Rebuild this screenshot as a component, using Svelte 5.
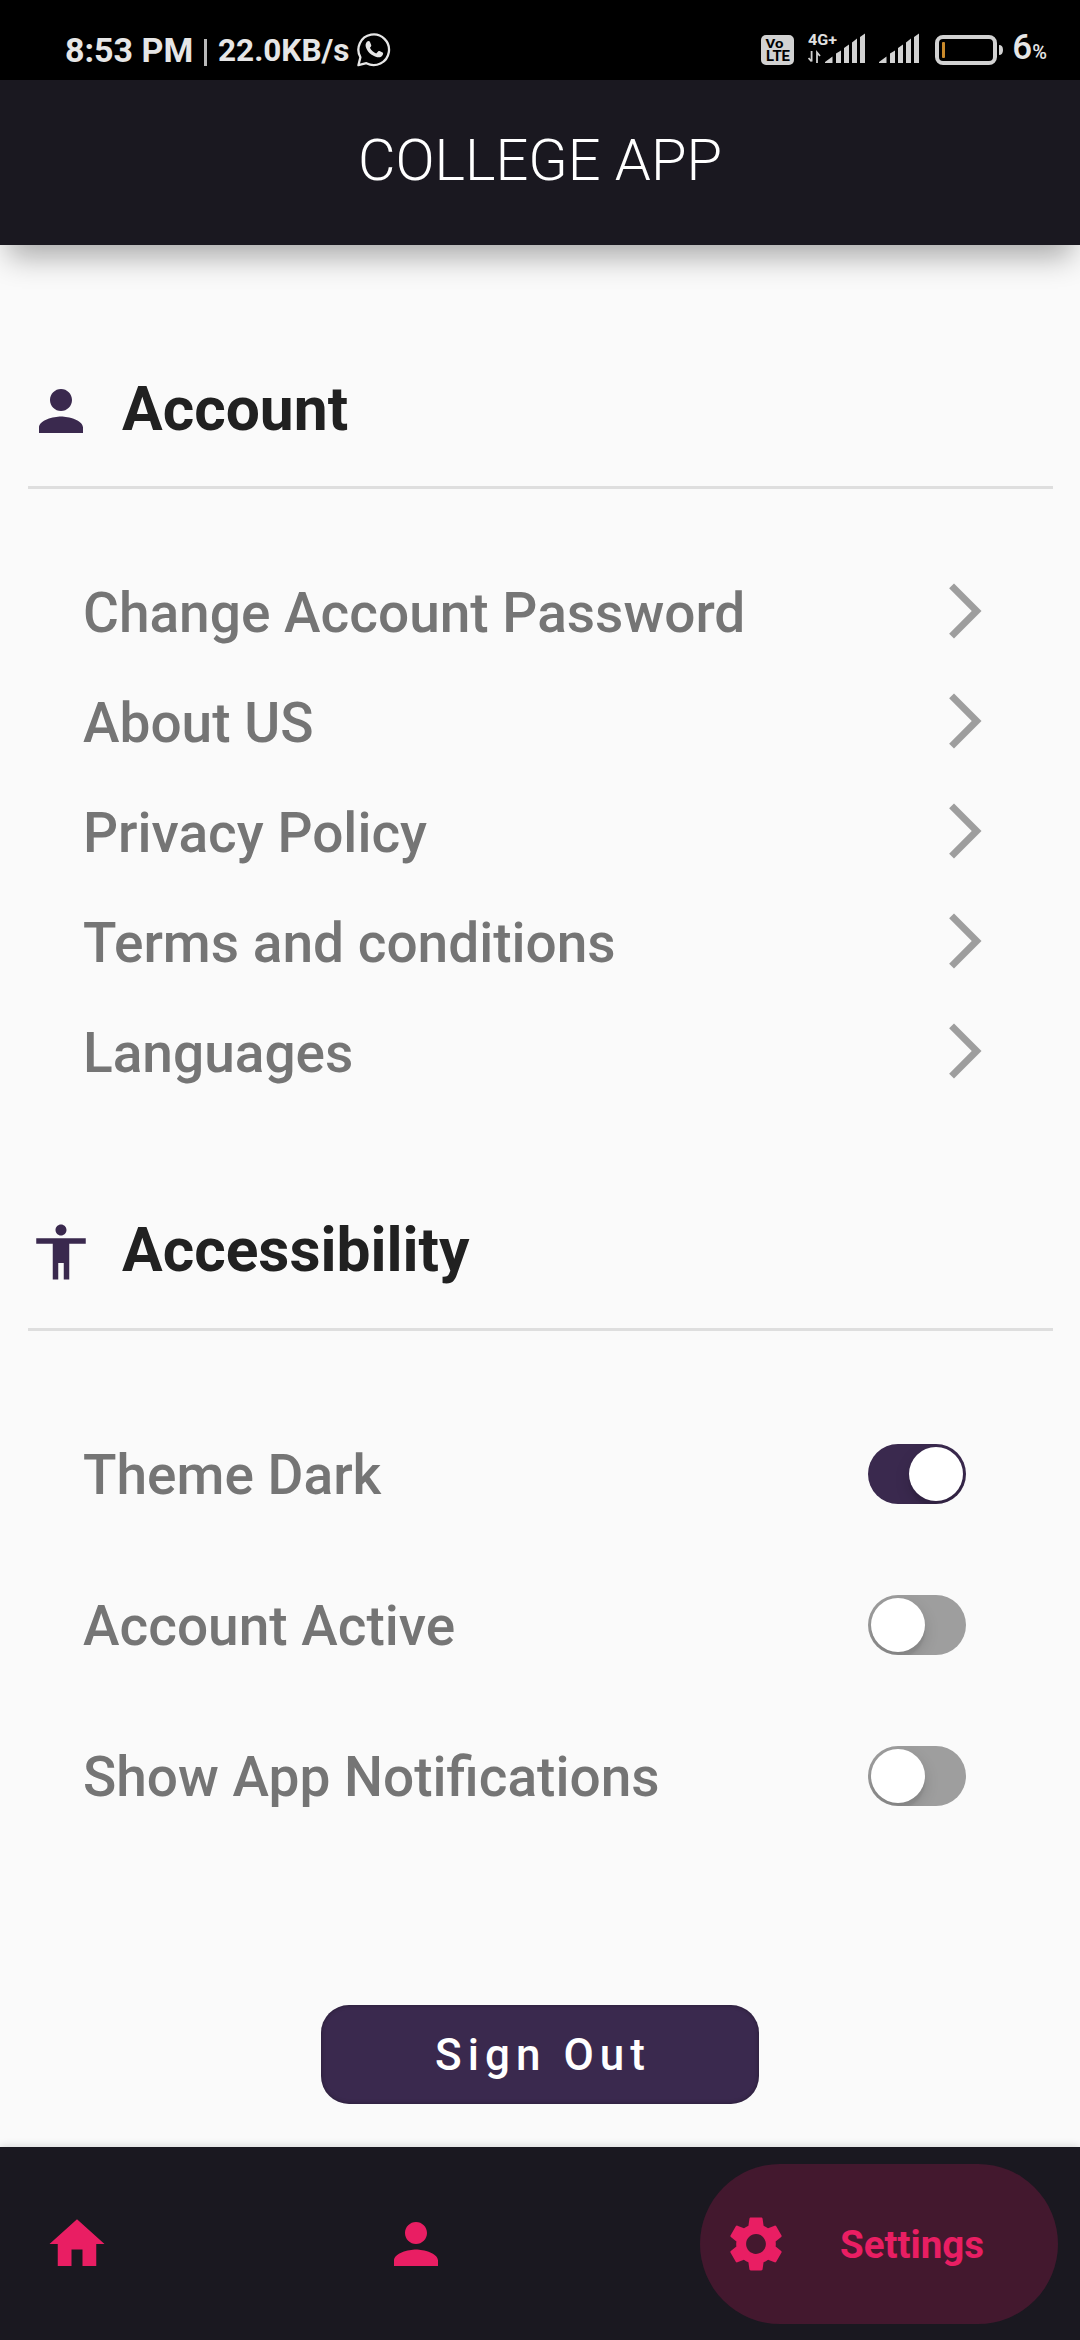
<script>
  const links = ['Change Account Password', 'About US', 'Privacy Policy', 'Terms and conditions', 'Languages'];
  let toggles = $state([
    { label: 'Theme Dark', on: true },
    { label: 'Account Active', on: false },
    { label: 'Show App Notifications', on: false }
  ]);
</script>

{#snippet person()}
  <svg class="icon" viewBox="0 0 24 24"><path d="M12 12c2.21 0 4-1.79 4-4s-1.79-4-4-4-4 1.79-4 4 1.79 4 4 4zm0 2c-2.67 0-8 1.34-8 4v2h16v-2c0-2.66-5.33-4-8-4z" /></svg>
{/snippet}

<div class="screen">
  <div class="status">
    <span class="time">8:53 PM</span>
    <span class="bar"></span>
    <span class="speed">22.0KB/s</span>
    <svg class="whatsapp" width="34" height="35" viewBox="0 0 34 35">
      <path d="M1.400 33.200 3.400 25.300A15.300 15.300 0 1 1 9.400 31.200Z" fill="none" stroke="#e6e6e6" stroke-width="2.300" stroke-linejoin="round" />
      <path d="M10.200 9.600c1-.8 2.300-.7 2.800.4l1.200 2.900c.3.800-.1 1.400-1.300 2.800 1.500 2.900 3.700 4.600 6.300 5.700l1.900-2c.4-.5.9-.6 1.500-.3l2.900 1.500c.8.400.7 1.200.3 2.200-.8 2-3.200 3-5.600 2.400-5.800-1.400-10.300-5.600-11.500-10.600-.4-1.900.2-3.800 1.500-5Z" fill="#e6e6e6" />
    </svg>
    <span class="grow"></span>
    <svg class="volte" width="33" height="30" viewBox="0 0 33 30">
      <rect width="33" height="30" rx="5" fill="#d2d2d2" />
      <text x="4.500" y="12.500" class="badge small" textLength="18" lengthAdjust="spacingAndGlyphs">Vo</text>
      <text x="5" y="26" class="badge" textLength="24" lengthAdjust="spacingAndGlyphs">LTE</text>
    </svg>
    <svg class="signal" width="58" height="40" viewBox="0 -4 58 40">
      <text x="0" y="12" class="net" textLength="29" lengthAdjust="spacingAndGlyphs">4G+</text>
      <path d="M3.600 18v10.500M0.500 25l3.100 3.500M9 30V19.500l3 3.500" fill="none" stroke="#d2d2d2" stroke-width="1.800" />
      <path d="M17 30v-1l7.500-5.500V30zM28 20.500l5-3V30h-5zM36 15l5-3.500V30h-5zM44 9.500l5-4V30h-5zM52 4l5-3.500V30h-5z" fill="#d2d2d2" />
    </svg>
    <svg class="signal2" width="41" height="32" viewBox="0 0 41 32">
      <path d="M0 30v-1l7.500-5.500V30zM11 20.500l5-3V30h-5zM19 15l5-3.500V30h-5zM27 9.500l5-4V30h-5zM35 4l5-3.500V30h-5z" fill="#d2d2d2" />
    </svg>
    <svg class="battery" width="68" height="30" viewBox="0 0 68 30">
      <rect x="2" y="2" width="58" height="26" rx="6" fill="none" stroke="#d2d2d2" stroke-width="4" />
      <rect x="7" y="7" width="3" height="16" rx="1" fill="#c98a2b" />
      <path d="M64 10q4 0 4 5t-4 5z" fill="#d2d2d2" />
    </svg>
    <span class="level">6<small>%</small></span>
  </div>

  <header><h1>COLLEGE APP</h1></header>

  <main>
    <section class="account">
      <div class="heading">
        {@render person()}
        <h2>Account</h2>
      </div>
      {#each links as link}
        <div class="row">
          <span class="label">{link}</span>
          <svg class="icon chevron" viewBox="0 0 24 24"><path d="M6.23 20.23 8 22l10-10L8 2 6.23 3.770 14.460 12z" /></svg>
        </div>
      {/each}
    </section>

    <section class="access">
      <div class="heading">
        <svg class="icon" viewBox="0 0 24 24"><path d="M12 2c1.100 0 2 .9 2 2s-.9 2-2 2-2-.9-2-2 .9-2 2-2zm9 7h-6v13h-2v-6h-2v6H9V9H3V7h18v2z" /></svg>
        <h2>Accessibility</h2>
      </div>
      {#each toggles as t}
        <div class="row tall">
          <span class="label">{t.label}</span>
          <button class="switch" class:on={t.on} aria-label={t.label} onclick={() => (t.on = !t.on)}><i></i></button>
        </div>
      {/each}
    </section>

    <button class="signout">Sign Out</button>
  </main>

  <nav>
    <span class="tab home"><svg class="icon" viewBox="0 0 24 24"><path d="M10 20v-6h4v6h5v-8h3L12 3 2 12h3v8z" /></svg></span>
    <span class="tab">{@render person()}</span>
    <span class="pill">
      <svg class="icon" viewBox="0 0 24 24"><path d="M19.140 12.940c.04-.3.060-.61.060-.94 0-.32-.02-.64-.07-.94l2.030-1.580c.18-.14.230-.41.120-.61l-1.920-3.320c-.12-.22-.37-.29-.59-.22l-2.390.96c-.5-.38-1.030-.7-1.620-.94l-.36-2.540c-.04-.24-.24-.41-.48-.41h-3.840c-.24 0-.43.170-.47.410l-.36 2.540c-.59.240-1.130.570-1.620.94l-2.390-.96c-.22-.08-.47 0-.59.220L2.740 8.870c-.12.210-.08.470.120.610l2.030 1.580c-.05.300-.09.630-.09.940s.02.640.070.940l-2.030 1.580c-.18.140-.23.410-.12.610l1.920 3.320c.12.220.37.290.59.220l2.390-.96c.5.380 1.030.7 1.620.94l.36 2.540c.05.240.240.410.480.410h3.840c.24 0 .44-.17.470-.41l.36-2.540c.59-.24 1.130-.56 1.620-.94l2.390.96c.22.080.470 0 .590-.22l1.920-3.320c.12-.22.070-.47-.12-.61l-2.010-1.580zM12 15.600c-1.980 0-3.600-1.620-3.600-3.600s1.620-3.600 3.600-3.600 3.600 1.620 3.600 3.600-1.620 3.600-3.600 3.600z" /></svg>
      <b>Settings</b>
    </span>
  </nav>
</div>

<style>
  :global(body) { margin: 0; background: #fafafa; }
  .screen {
    width: 1080px; height: 2340px; display: flex; flex-direction: column;
    background: #fafafa; font-family: Roboto, sans-serif; overflow: hidden;
  }
  svg { display: block; flex: none; }
  h1, h2 { margin: 0; }
  button { border: 0; padding: 0; font-family: inherit; }
  .icon { width: 66px; height: 66px; fill: currentColor; }
  .grow { flex: 1; }

  .status {
    height: 80px; flex: none; box-sizing: border-box; padding: 19px 33px 0 65px;
    display: flex; align-items: center; background: #000; color: #e6e6e6;
    font-weight: 700; white-space: nowrap; line-height: 40px;
  }
  .time { font-size: 34px; width: 139px; margin-top: 1px; }
  .bar { width: 3px; height: 27px; background: #b9b9b9; margin-top: 6px; }
  .speed { font-size: 31.500px; width: 139px; margin-left: 11px; margin-top: 3px; }
  .whatsapp { margin-top: -1px; }
  .badge { font-size: 14px; font-weight: 700; fill: #000; }
  .badge.small { font-size: 12.500px; }
  .net { font-size: 15px; font-weight: 700; fill: #e0e0e0; }
  .signal { margin-left: 14px; margin-top: -1px; }
  .signal2 { margin-left: 13px; margin-top: -1px; }
  .battery { margin-left: 15px; }
  .level { font-size: 35px; margin-left: 9px; margin-top: 1px; font-weight: 500; }
  .level small { font-size: 20px; }

  header {
    height: 165px; flex: none; box-sizing: border-box; padding-bottom: 6px; position: relative;
    display: flex; align-items: center; justify-content: center;
    background: #1a1820; color: #fff; box-shadow: 0 20px 28px -8px rgba(0, 0, 0, .32);
  }
  h1 { font-size: 57.750px; font-weight: 300; line-height: 68px; white-space: nowrap; }

  main { flex: 1; display: flex; flex-direction: column; }
  .account { padding-top: 133px; }
  .access { padding-top: 113px; }
  .heading {
    height: 108px; margin: 0 27px 0 28px; border-bottom: 3px solid #dedede;
    display: flex; align-items: flex-start; color: #3a294e;
  }
  .access .heading { height: 109px; }
  h2 { margin-left: 28px; font-size: 60.500px; line-height: 64px; font-weight: 700; color: #212121; }
  .row {
    height: 110px; padding: 0 82px 0 83px; display: flex; align-items: center;
    justify-content: space-between; color: #757575;
  }
  .heading + .row { margin-top: 67px; }
  .label { font-size: 55px; font-weight: 500; line-height: 64px; padding-top: 4px; white-space: nowrap; }
  .chevron { color: #9e9e9e; }
  .row.tall { height: 151px; padding-right: 114px; }
  .tall .label { padding-top: 2px; }
  .switch {
    width: 98px; height: 60px; border-radius: 30px; padding: 3px; box-sizing: border-box;
    display: flex; background: #9e9e9e; overflow: hidden;
  }
  .switch.on { background: #3a294e; justify-content: flex-end; }
  .switch i {
    width: 54px; height: 54px; border-radius: 50%; background: #fff;
    box-shadow: 0 6px 15px rgba(0, 0, 0, .15), 0 6px 2px rgba(0, 0, 0, .06);
  }
  .signout {
    width: 438px; height: 99px; margin: auto auto 43px; border-radius: 28px; background: #3a294e;
    box-shadow: inset 0 0 4px rgba(0, 0, 0, .35); color: #fff; padding-left: 6px;
    font-size: 44px; font-weight: 500; letter-spacing: 6.050px;
  }

  nav {
    height: 193px; flex: none; box-sizing: border-box; padding: 0 22px 0 44px;
    display: flex; align-items: center;
    background: #1a1820; color: #e91e63; box-shadow: 0 -1px 8px rgba(0, 0, 0, .14);
  }
  .tab { display: flex; }
  .home { margin-right: 273px; }
  .pill {
    width: 358px; height: 160px; border-radius: 80px; box-sizing: border-box; padding-left: 23px;
    margin-left: auto; display: flex; align-items: center; background: #43182e;
  }
  .pill b { margin-left: 51px; padding-top: 2px; font-size: 38.500px; line-height: 46px; font-weight: 700; }
</style>
